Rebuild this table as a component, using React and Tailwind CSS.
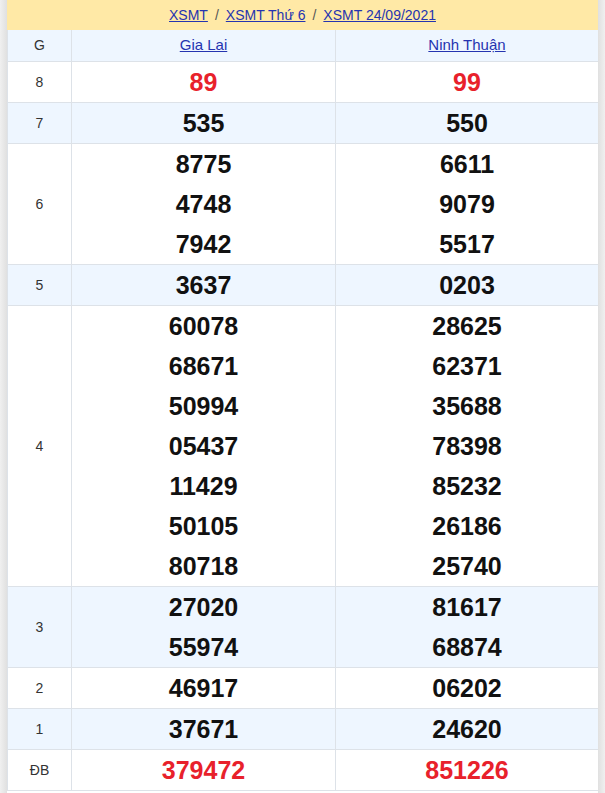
import React from "react";

const rows = [
  { g: "8", a: ["89"], b: ["99"], red: true, blue: false },
  { g: "7", a: ["535"], b: ["550"], blue: true },
  { g: "6", a: ["8775", "4748", "7942"], b: ["6611", "9079", "5517"], blue: false },
  { g: "5", a: ["3637"], b: ["0203"], blue: true },
  { g: "4", a: ["60078", "68671", "50994", "05437", "11429", "50105", "80718"], b: ["28625", "62371", "35688", "78398", "85232", "26186", "25740"], blue: false },
  { g: "3", a: ["27020", "55974"], b: ["81617", "68874"], blue: true },
  { g: "2", a: ["46917"], b: ["06202"], blue: false },
  { g: "1", a: ["37671"], b: ["24620"], blue: true },
  { g: "ĐB", a: ["379472"], b: ["851226"], red: true, blue: false },
];

function Nums({ list, red }) {
  return (
    <div className="flex flex-col border-r border-b border-[#dde2e8]">
      {list.map((n, i) => (
        <div
          key={i}
          className={
            "h-10 flex items-center justify-center text-[25px] font-bold leading-none " +
            (red ? "text-[#e8212b]" : "text-[#111111]")
          }
        >
          {n}
        </div>
      ))}
    </div>
  );
}

export default function App() {
  return (
    <div className="w-[605px] h-[793px] bg-white flex overflow-hidden" style={{ fontFamily: '"Liberation Sans", Arial, sans-serif' }}>
      <div className="w-[7px] shrink-0 bg-gradient-to-r from-[#f0f0f0] to-[#e0e0e0]" />
      <div className="w-[591px] shrink-0 flex flex-col">
        <div className="h-[30px] bg-[#ffe9a6] flex items-center justify-center gap-[7px] text-[14px] text-[#2534b0]">
          <a className="underline" href="#">XSMT</a>
          <span className="text-[#555]">/</span>
          <a className="underline" href="#">XSMT Thứ 6</a>
          <span className="text-[#555]">/</span>
          <a className="underline" href="#">XSMT 24/09/2021</a>
        </div>
        <div className="grid grid-cols-[64px_264px_263px] border-l border-[#dde2e8]">
          <div className="h-[32px] bg-[#eef6ff] border-r border-b border-[#dde2e8] flex items-center justify-center text-[14px] text-[#333]">G</div>
          <div className="h-[32px] bg-[#eef6ff] border-r border-b border-[#dde2e8] flex items-center justify-center text-[15px] text-[#2534b0]"><a className="underline" href="#">Gia Lai</a></div>
          <div className="h-[32px] bg-[#eef6ff] border-r border-b border-[#dde2e8] flex items-center justify-center text-[15px] text-[#2534b0]"><a className="underline" href="#">Ninh Thuận</a></div>
          {rows.map((r) => (
            <React.Fragment key={r.g}>
              <div className={"border-r border-b border-[#dde2e8] flex items-center justify-center text-[14px] text-[#333] " + (r.blue ? "bg-[#eef6ff]" : "bg-white")}>{r.g}</div>
              <div className={r.blue ? "bg-[#eef6ff]" : "bg-white"}><Nums list={r.a} red={r.red} /></div>
              <div className={r.blue ? "bg-[#eef6ff]" : "bg-white"}><Nums list={r.b} red={r.red} /></div>
            </React.Fragment>
          ))}
        </div>
      </div>
      <div className="w-[7px] shrink-0 bg-gradient-to-r from-[#e0e0e0] to-[#f0f0f0]" />
    </div>
  );
}
